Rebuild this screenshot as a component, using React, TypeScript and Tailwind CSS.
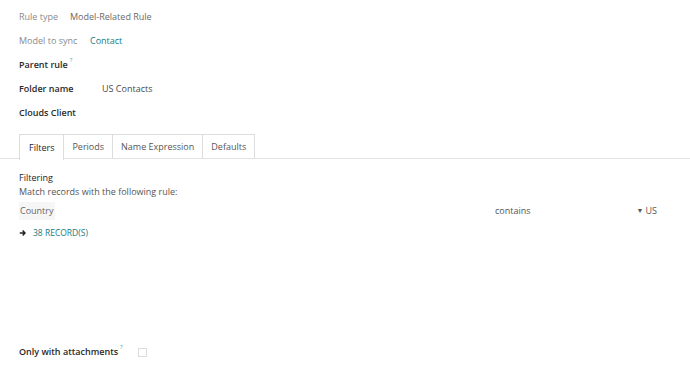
import React from 'react';

const font = { fontFamily: '"Open Sans", "Noto Sans", sans-serif' };

const tabs = ['Filters', 'Periods', 'Name Expression', 'Defaults'];

export default function App() {
  return (
    <div className="w-[690px] h-[390px] bg-white text-[9px] text-[#4a4a4a] overflow-hidden" style={font}>
      <div className="px-[19px] pt-[5px]">
        <div className="flex items-center h-[24px]">
          <span className="text-[#8a8a8a] w-[51px]">Rule type</span>
          <span className="text-[#6a6a6a]">Model-Related Rule</span>
        </div>
        <div className="flex items-center h-[24px]">
          <span className="text-[#8a8a8a] w-[71px]">Model to sync</span>
          <span className="text-[#1a7a80]">Contact</span>
        </div>
        <div className="flex items-center h-[24px]">
          <span className="text-[#2a2a2a] font-semibold">Parent rule</span>
          <sup className="text-[#3aa0a0] text-[6px] ml-[2px] -mt-[4px]">?</sup>
        </div>
        <div className="flex items-center h-[24px]">
          <span className="text-[#2a2a2a] font-semibold w-[83px]">Folder name</span>
          <span className="text-[#4a4a4a]">US Contacts</span>
        </div>
        <div className="flex items-center h-[24px]">
          <span className="text-[#2a2a2a] font-semibold">Clouds Client</span>
        </div>
      </div>

      <div className="mt-[9px] border-b border-[#e2e2e2] px-[19px] flex h-[25px]">
        {tabs.map((t, i) => (
          <div
            key={t}
            className={`flex items-center border-t border-r border-[#dcdcdc] ${i === 0 ? 'px-[9px] border-l text-[#212529] bg-white h-[26px] -mb-px' : 'px-[8px] text-[#555]'}`}
          >
            {t}
          </div>
        ))}
      </div>

      <div className="px-[19px] pt-[12px]">
        <div className="text-[#212529] leading-[14px]">Filtering</div>
        <div className="text-[#555] leading-[14px]">Match records with the following rule:</div>
        <div className="flex items-center h-[18px] mt-[3px]">
          <span className="bg-[#f6f6f6] px-[1px] h-[18px] flex items-center text-[#666] w-[36px]">Country</span>
          <span className="ml-[440px] text-[#555]">contains</span>
          <span className="ml-auto mr-[14px] text-[#555] flex items-center gap-[2px]">
            <span className="text-[7px]">▼</span>US
          </span>
        </div>
        <div className="flex items-center h-[16px] mt-[5px] gap-[6px]">
          <svg width="8" height="8" viewBox="0 0 10 10" className="text-[#222]">
            <path d="M1 5h6M4.5 2l3 3-3 3" stroke="currentColor" strokeWidth="1.8" fill="none" />
          </svg>
          <span className="text-[#1a7a80] text-[8.5px]">38 RECORD(S)</span>
        </div>
      </div>

      <div className="px-[19px] mt-[101px] flex items-center h-[20px]">
        <span className="text-[#2a2a2a] font-semibold">Only with attachments</span>
        <sup className="text-[#3aa0a0] text-[6px] ml-[2px] -mt-[4px]">?</sup>
        <span className="ml-[15px] w-[9px] h-[9px] border border-[#dcdcdc]" />
      </div>
    </div>
  );
}
